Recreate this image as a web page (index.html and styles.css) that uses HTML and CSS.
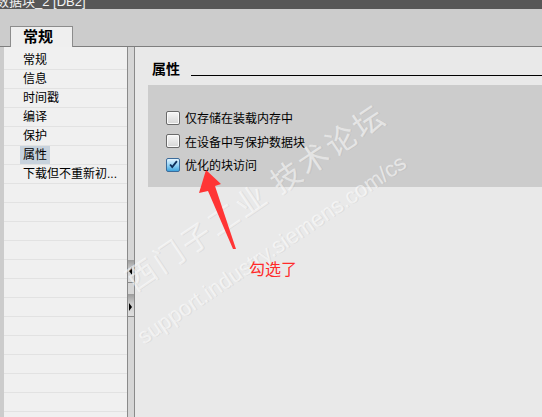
FILE: index.html
```html
<!DOCTYPE html>
<html lang="zh-CN">
<head>
  <meta charset="UTF-8" />
  <title>数据块_2 [DB2]</title>
  <link rel="stylesheet" href="styles.css">
</head>
<body>
  <div class="titlebar"><span>数据块_2 [DB2]</span></div>

  <div class="tabstrip">
    <div class="tab">常规</div>
  </div>

  <div class="main">
    <div class="gutter"></div>

    <!-- 左侧导航 -->
    <div class="nav">
      <div class="nav-row">常规</div>
      <div class="nav-row">信息</div>
      <div class="nav-row">时间戳</div>
      <div class="nav-row">编译</div>
      <div class="nav-row">保护</div>
      <div class="nav-row"><span class="selected">属性</span></div>
      <div class="nav-row">下载但不重新初...</div>
    </div>

    <!-- 分隔条 -->
    <div class="splitter">
      <div class="split-btn"><span class="tri-left"></span></div>
      <div class="split-btn"><span class="tri-right"></span></div>
    </div>

    <!-- 属性内容 -->
    <div class="content">
      <div class="section-head">
        <span class="section-title">属性</span>
        <span class="section-line"></span>
      </div>

      <div class="options">
        <label class="option"><span class="check"></span>仅存储在装载内存中</label>
        <label class="option"><span class="check"></span>在设备中写保护数据块</label>
        <label class="option"><span class="check checked">
          <svg viewBox="0 0 13 13" width="11" height="11"><path d="M2.5 6.5 L5 9.5 L10.5 2.5" fill="none" stroke="#0d2f5c" stroke-width="2.2"/></svg>
        </span>优化的块访问</label>
      </div>
    </div>
  </div>

  <!-- 水印 -->
  <div class="watermark wm-cn">西门子工业 技术论坛</div>
  <div class="watermark wm-url">support.industry.siemens.com/cs</div>

  <!-- 标注 -->
  <svg class="arrow" width="60" height="100" viewBox="0 0 60 100">
    <polygon points="12,5 27,19 21,21 42,84 39,84 14,26 5,28" fill="#ff3535"/>
  </svg>
  <div class="note">勾选了</div>
</body>
</html>
```

FILE: styles.css
```css
* {
  margin: 0;
  padding: 0;
  box-sizing: border-box;
}

body {
  width: 542px;
  height: 417px;
  overflow: hidden;
  position: relative;
  background-color: #cccccc;
  font-family: 'Liberation Sans', 'Noto Sans CJK SC', sans-serif;
  font-size: 12px;
  color: #000;
}

.titlebar {
  height: 9px;
  background-color: #575757;
  overflow: hidden;
}

.titlebar span {
  display: block;
  margin-top: -5px;
  margin-left: -4px;
  color: #f4f4f4;
  font-size: 13px;
  line-height: 13px;
  white-space: nowrap;
}

.tabstrip {
  height: 38px;
  display: flex;
  align-items: flex-end;
  padding-left: 10px;
  background-color: #cccccc;
  border-bottom: 1px solid #7e7e7e;
}

.tab {
  width: 63px;
  height: 21px;
  margin-bottom: -1px;
  background-color: #efefef;
  border: 1px solid #8c8c8c;
  border-bottom: none;
  font-size: 15px;
  font-weight: bold;
  line-height: 20px;
  padding-left: 12px;
}

.main {
  display: flex;
  height: 370px;
}

.gutter {
  width: 4px;
  background-color: #cccccc;
}

.nav {
  width: 123px;
  padding-top: 4px;
  background-color: #f0f0f0;
  background-image: repeating-linear-gradient(to bottom, transparent 0, transparent 18px, #e2e2e2 18px, #e2e2e2 19px);
  background-position: 0 4px;
}

.nav-row {
  height: 19px;
  line-height: 18px;
  padding-left: 19px;
  white-space: nowrap;
}

.selected {
  display: inline-block;
  background-color: #c7d2dd;
  padding: 0 3px;
  margin-left: -3px;
  line-height: 18px;
}

.splitter {
  width: 8px;
  background-color: #d6d6d6;
  border-left: 1px solid #8a8a8a;
  border-right: 1px solid #8a8a8a;
  padding-top: 213px;
}

.split-btn {
  height: 23px;
  margin-bottom: 11px;
  background: linear-gradient(to bottom, #9c9c9c, #cdcdcd 45%, #dedede);
  border-bottom: 1px solid #8a8a8a;
  display: flex;
  align-items: center;
  padding-left: 1px;
}

.tri-left {
  width: 0;
  height: 0;
  border-top: 4px solid transparent;
  border-bottom: 4px solid transparent;
  border-right: 3px solid #000;
}

.tri-right {
  width: 0;
  height: 0;
  margin-top: 4px;
  border-top: 4px solid transparent;
  border-bottom: 4px solid transparent;
  border-left: 3px solid #000;
}

.content {
  flex: 1;
  background-color: #e9e9e9;
}

.section-head {
  display: flex;
  height: 16px;
  margin-top: 14px;
  padding-left: 17px;
}

.section-title {
  font-size: 14px;
  font-weight: bold;
  line-height: 16px;
}

.section-line {
  flex: 1;
  height: 15px;
  margin-left: 11px;
  border-bottom: 1px solid #000;
}

.options {
  margin: 8px 0 0 13px;
  height: 102px;
  padding: 26px 0 0 18px;
  background-color: #cccccc;
}

.option {
  display: flex;
  align-items: center;
  height: 23.5px;
  margin-top: -5px;
}

.option + .option {
  margin-top: 0;
}

.check {
  width: 14px;
  height: 14px;
  margin-right: 5px;
  border: 1px solid #6a6a6a;
  border-radius: 2px;
  background: linear-gradient(to bottom, #f6f6f6, #d6d6d6);
  box-shadow: inset 0 0 0 1px #fafafa;
  display: flex;
  align-items: center;
  justify-content: center;
}

.check.checked {
  border-color: #3c6b9a;
  background: linear-gradient(to bottom, #e2f4ff, #8fd0f4 55%, #3da2dc);
  box-shadow: none;
}

.watermark {
  position: absolute;
  white-space: nowrap;
  color: rgba(255, 255, 255, 0.55);
  text-shadow: 1px 1px 0 rgba(150, 150, 150, 0.15);
  transform-origin: 0 100%;
  transform: rotate(-34deg);
}

.wm-cn {
  left: 136px;
  top: 264px;
  font-family: 'Noto Sans CJK SC', sans-serif;
  font-size: 30px;
  line-height: 30px;
  letter-spacing: 3px;
}

.wm-url {
  left: 146px;
  top: 326px;
  font-size: 22px;
  line-height: 22px;
}

.arrow {
  position: absolute;
  left: 194px;
  top: 165px;
}

.note {
  position: absolute;
  left: 249px;
  top: 259px;
  font-size: 16px;
  line-height: 18px;
  color: #ff2a2a;
  font-family: 'Noto Sans CJK SC', sans-serif;
}
```
